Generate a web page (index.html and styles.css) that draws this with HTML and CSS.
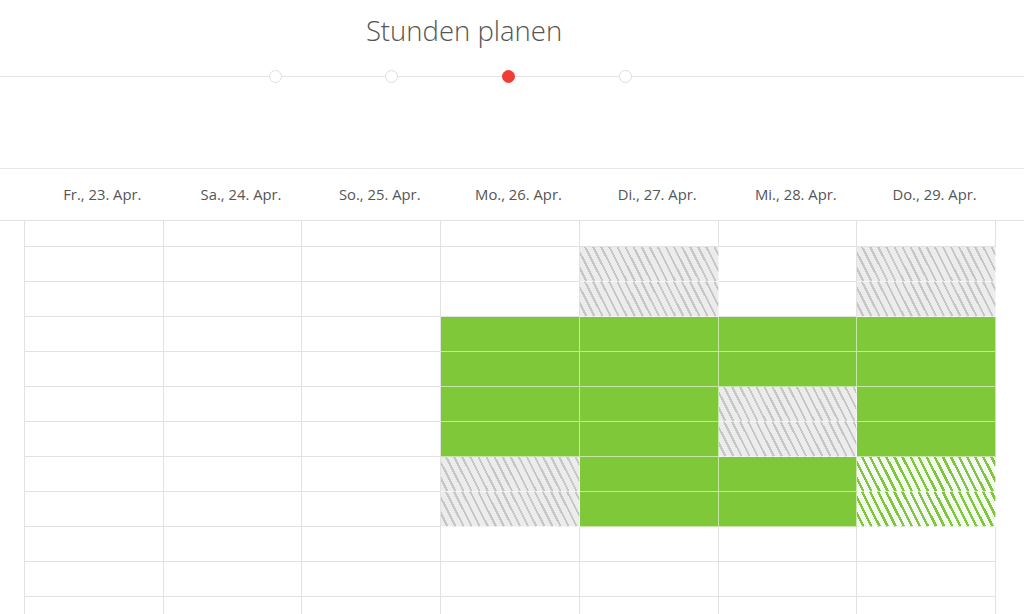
FILE: index.html
```html
<!DOCTYPE html>
<html lang="de">
<head>
<meta charset="utf-8">
<title>Stunden planen</title>
<link rel="stylesheet" href="styles.css">
</head>
<body>
<div class="page">
  <h1 class="title">Stunden planen</h1>
  <div class="stepper">
    <span class="dot"></span>
    <span class="dot"></span>
    <span class="dot active"></span>
    <span class="dot"></span>
  </div>
  <div class="days">
    <div class="day">Fr., 23. Apr.</div>
    <div class="day">Sa., 24. Apr.</div>
    <div class="day">So., 25. Apr.</div>
    <div class="day">Mo., 26. Apr.</div>
    <div class="day">Di., 27. Apr.</div>
    <div class="day">Mi., 28. Apr.</div>
    <div class="day">Do., 29. Apr.</div>
  </div>
  <div class="grid" id="grid"></div>
</div>
<script src="app.js"></script>
</body>
</html>
```
FILE: app.js
```js
// rows: index 0 = partial top row, then full rows
// codes: . empty, g green, h/b gray hatched, s green hatched
var rows = [
  ".......",
  "....h.h",
  "....h.h",
  "...gggg",
  "...gggg",
  "...ggbg",
  "...ggbg",
  "...bggs",
  "...bggs",
  ".......",
  ".......",
  "......."
];
var grid = document.getElementById('grid');
var map = { '.': '', 'g': 'busy', 'b': 'blocked', 'h': 'blocked', 's': 'tentative' };
rows.forEach(function (r, i) {
  for (var c = 0; c < 7; c++) {
    var cell = document.createElement('div');
    cell.className = 'cell' + (i === 0 ? ' first' : '') + (map[r[c]] ? ' ' + map[r[c]] : '');
    grid.appendChild(cell);
  }
});
```
FILE: styles.css
```css
* { box-sizing: border-box; }
html, body {
  margin: 0;
  padding: 0;
  background: #fff;
  height: 614px;
  overflow: hidden;
}
body {
  font-family: "Open Sans", "Noto Sans", sans-serif;
  color: #555;
}
.page { width: 1024px; }

.title {
  margin: 0;
  width: 928px;
  padding-top: 12px;
  text-align: center;
  font-size: 27.5px;
  font-weight: 300;
  line-height: 38px;
  color: #555;
}

.stepper {
  display: flex;
  align-items: center;
  gap: 103.7px;
  height: 13px;
  margin-top: 20px;
  padding-left: 268.5px;
  background: linear-gradient(#e4e4e4, #e4e4e4) 0 6px / 100% 1px no-repeat;
}
.dot {
  width: 13px;
  height: 13px;
  border-radius: 50%;
  background: #fff;
  border: 1px solid #dedede;
}
.dot.active {
  background: #f23c36;
  border-color: #f23c36;
}

.days {
  margin-top: 85px;
  height: 53px;
  border-top: 1px solid #e8e8e8;
  border-bottom: 1px solid #e2e2e2;
  display: grid;
  grid-template-columns: repeat(7, 138.71px);
  padding-left: 33px;
  align-items: center;
}
.day {
  text-align: center;
  font-size: 14.8px;
  color: #555;
  padding-bottom: 2px;
  white-space: nowrap;
}

.grid {
  margin-left: 24px;
  width: 972px;
  border-left: 1px solid #e2e2e2;
  display: grid;
  grid-template-columns: repeat(7, 1fr);
  grid-template-rows: 26px;
  grid-auto-rows: 35px;
}
.cell {
  border-right: 1px solid #e2e2e2;
  border-bottom: 1px solid #e2e2e2;
}

.cell.busy {
  background: #7ec83a;
  border-color: rgba(255, 255, 255, 0.55);
}
.cell.blocked {
  background-color: #ececec;
  background-image: repeating-linear-gradient(63deg, #ececec 0 4.6px, #c6c6c6 4.6px 6.6px, #ececec 6.6px 7.2px);
  border-color: rgba(255, 255, 255, 0.6);
}
.cell.tentative {
  background-color: #fff;
  background-image: repeating-linear-gradient(63deg, #f4faef 0 4.4px, #7fc63f 4.4px 6.8px, #f4faef 6.8px 7.2px);
  border-color: rgba(255, 255, 255, 0.6);
}
```
